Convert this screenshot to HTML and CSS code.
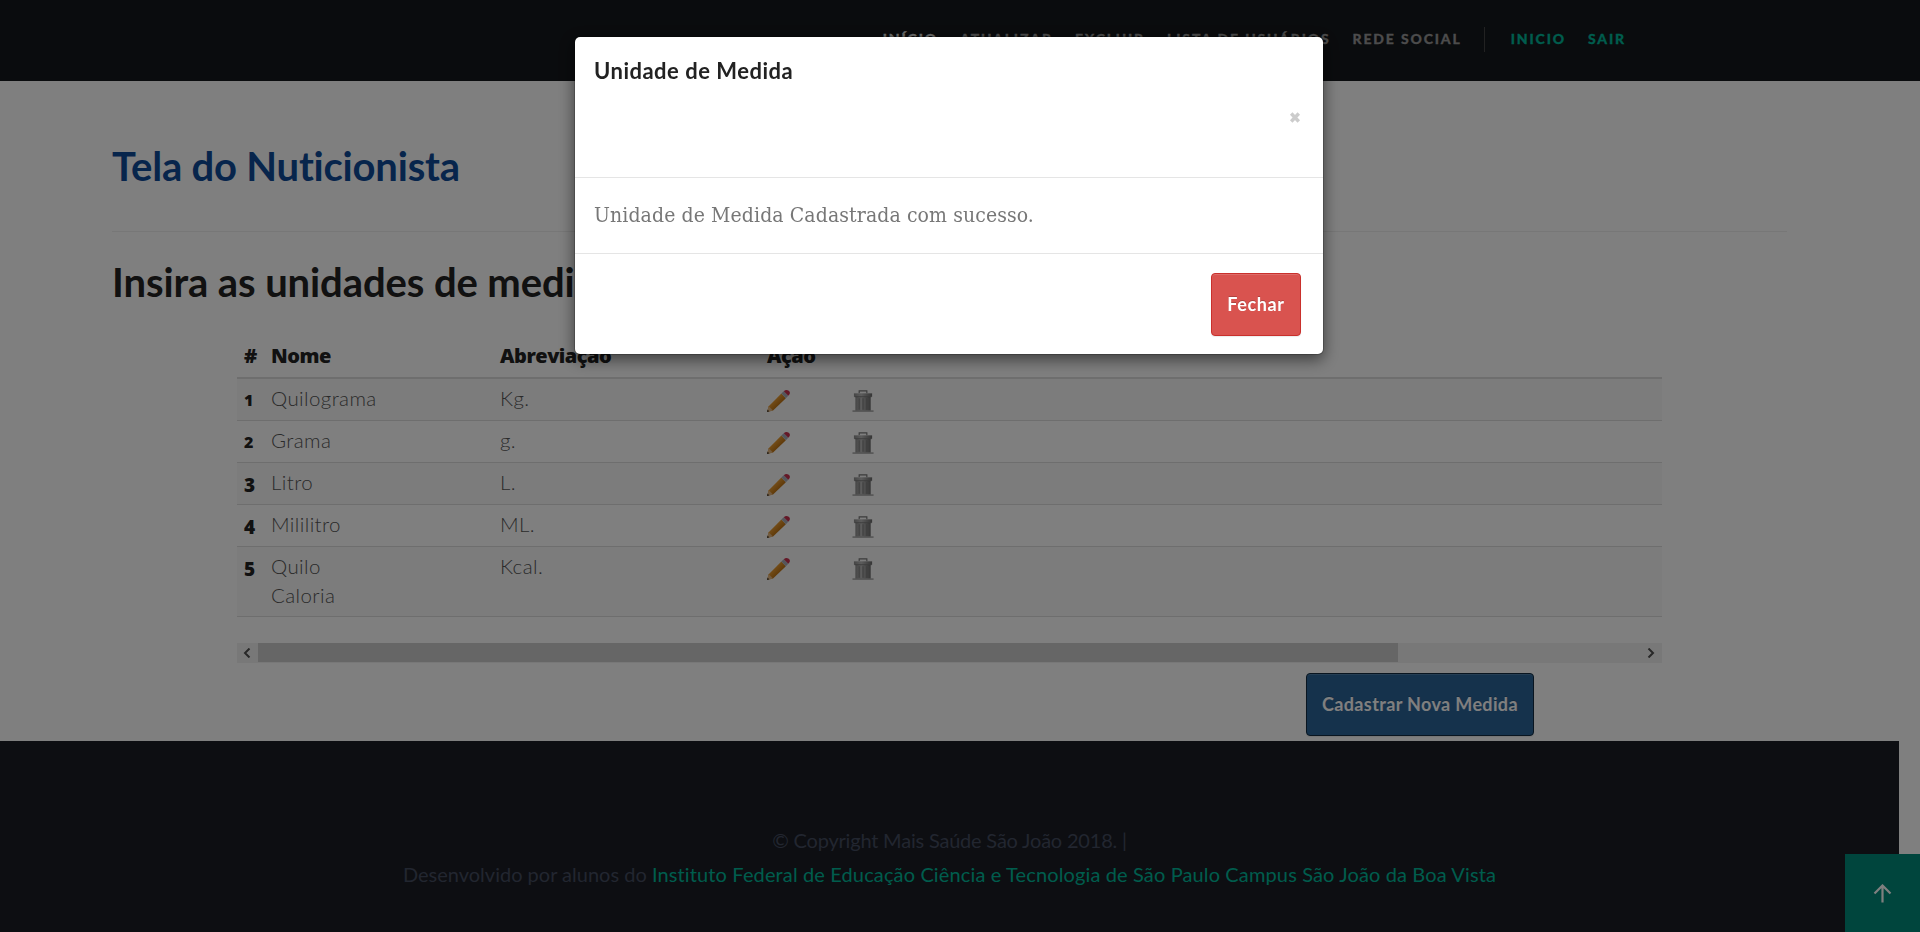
FILE: index.html
```html
<!DOCTYPE html>
<html lang="pt-BR">
<head>
<meta charset="utf-8">
<title>Mais Saúde São João</title>
<link rel="stylesheet" href="styles.css">
</head>
<body>
<svg class="sprite" aria-hidden="true">
  <defs>
    <linearGradient id="wood" x1="0" y1="0" x2="1" y2="1"><stop offset=".3" stop-color="#f2a63a"/><stop offset=".7" stop-color="#b4690c"/></linearGradient>
    <linearGradient id="metal"><stop offset="0" stop-color="#8c8c8c"/><stop offset=".4" stop-color="#b8b8b8"/><stop offset="1" stop-color="#6c6c6c"/></linearGradient>
  </defs>
  <symbol id="pencil" viewBox="0 0 24 24">
    <path d="M0 23.500 1.800 17.500 15 4.300 19.700 9 6.300 22Z" fill="url(#wood)"/>
    <path d="M0 23.500 1.800 17.500 6.300 22Z" fill="#e3b680"/>
    <path d="M0 23.500 .7 21.200 2.300 22.800Z" fill="#222"/>
    <path d="M15 4.300 17.500 1.800 22.200 6.500 19.700 9Z" fill="#a9adb8"/>
    <path d="M17.500 1.800Q20 -.8 22.700 1.400T22.200 6.500Z" fill="#c9304f"/>
  </symbol>
  <symbol id="trash" viewBox="0 0 24 24">
    <path d="M7.500 4V1.500H15.500V4" fill="none" stroke="#777" stroke-width="1.200"/>
    <path d="M2 4H21V7.500H2Z" fill="url(#metal)"/>
    <path d="M3.500 7.500H19.500V22H3.500Z" fill="url(#metal)"/>
    <path d="M2.500 7.500H20.500" stroke="#666" stroke-width=".8"/>
    <path d="M7.500 9V21M11.500 9V21M15.500 9V21" stroke="#7a7a7a" stroke-width="1.100"/>
    <path d="M.5 22.500H22.500" stroke="#8a8a8a" stroke-width="1.200"/>
  </symbol>
</svg>
<header class="topbar">
  <nav class="nav">
    <a class="nav-item active">INÍCIO</a><a class="nav-item">ATUALIZAR</a><a class="nav-item">EXCLUIR</a><a class="nav-item">LISTA DE USUÁRIOS</a><a class="nav-item">REDE SOCIAL</a>
    <span class="nav-divider"></span>
    <a class="nav-item accent">INICIO</a><a class="nav-item accent">SAIR</a>
  </nav>
</header>
<main class="page">
  <h1 class="title">Tela do Nuticionista</h1>
  <h2 class="subtitle">Insira as unidades de medida</h2>
  <div class="table-area">
    <table class="units">
      <thead><tr><th class="c-id">#</th><th class="c-name">Nome</th><th class="c-abbr">Abreviação</th><th class="c-edit">Ação</th><th></th></tr></thead>
      <tbody>
        <tr><th class="small-num">1</th><td>Quilograma</td><td>Kg.</td><td><svg class="icon"><use href="#pencil"/></svg></td><td><svg class="icon"><use href="#trash"/></svg></td></tr>
        <tr><th class="small-num">2</th><td>Grama</td><td>g.</td><td><svg class="icon"><use href="#pencil"/></svg></td><td><svg class="icon"><use href="#trash"/></svg></td></tr>
        <tr><th class="low-num">3</th><td>Litro</td><td>L.</td><td><svg class="icon"><use href="#pencil"/></svg></td><td><svg class="icon"><use href="#trash"/></svg></td></tr>
        <tr><th class="low-num">4</th><td>Mililitro</td><td>ML.</td><td><svg class="icon"><use href="#pencil"/></svg></td><td><svg class="icon"><use href="#trash"/></svg></td></tr>
        <tr><th class="low-num">5</th><td>Quilo<br>Caloria</td><td>Kcal.</td><td><svg class="icon"><use href="#pencil"/></svg></td><td><svg class="icon"><use href="#trash"/></svg></td></tr>
      </tbody>
    </table>
    <div class="scrollbar">
      <span class="arrow"><svg width="8" height="10" viewBox="0 0 8 10"><path d="M6.500 .5 2 5 6.500 9.500"/></svg></span>
      <span class="thumb"></span>
      <span class="arrow right"><svg width="8" height="10" viewBox="0 0 8 10"><path d="M1.500 .5 6 5 1.500 9.500"/></svg></span>
    </div>
  </div>
  <div class="actions"><button class="btn primary">Cadastrar Nova Medida</button></div>
</main>
<footer class="footer">
  <p class="copyright">© Copyright Mais Saúde São João 2018. |</p>
  <p>Desenvolvido por alunos do <a>Instituto Federal de Educação Ciência e Tecnologia de São Paulo Campus São João da Boa Vista</a></p>
</footer>
<a class="to-top"><svg width="19" height="19" viewBox="0 0 19 19"><path d="M9.500 18.500V2M1.500 9.500 9.500 1.500 17.500 9.500"/></svg></a>
<div class="backdrop">
  <section class="modal">
    <header class="modal-head"><h4>Unidade de Medida</h4><svg class="close" viewBox="0 0 12 11"><path d="M2.200 1.500 9.800 9.500M9.800 1.500 2.200 9.500"/></svg></header>
    <p class="modal-body">Unidade de Medida Cadastrada com sucesso.</p>
    <footer class="modal-foot"><button class="btn danger">Fechar</button></footer>
  </section>
</div>
</body>
</html>
```
FILE: styles.css
```css
* { box-sizing: border-box; }
html, body { margin: 0; height: 100%; overflow: hidden; }
body { background: #fff; font-family: Lato, "Open Sans", sans-serif; color: #222; }
.sprite { position: absolute; width: 0; height: 0; }

.topbar { height: 81px; background: #15181c; }
.nav { display: flex; align-items: center; justify-content: flex-end; height: 79px; width: 1626px; gap: 22px; }
.nav-item { padding-bottom: 2px; font-size: 14px; font-weight: 900; letter-spacing: 1.85px; color: #999; -webkit-text-stroke: .3px; }
.nav-item.active { color: #ddd; }
.nav-item.accent { color: #00b99b; }
.nav-divider { width: 1px; height: 25px; margin-right: 4px; background: #444; }

.page { height: 660px; padding: 0 133px 0 112px; }
.title, .subtitle { margin: 0; font-size: 40px; font-weight: 700; line-height: 44px; }
.title { height: 151px; padding-top: 63px; letter-spacing: -.2px; color: #0f4b98; border-bottom: 1px solid #eee; }
.subtitle { padding-top: 28px; height: 101px; letter-spacing: -.1px; color: #222; }
.table-area { width: 1425px; margin-left: 125px; }
.units { width: 100%; border-collapse: separate; border-spacing: 0; table-layout: fixed; font-size: 20.5px; line-height: 29px; }
.units th, .units td { padding: 5px 0 7px 7px; text-align: left; vertical-align: top; border-bottom: 1px solid #ddd; }
.units thead th { padding: 8px 0 7px 7px; height: 46px; border-bottom: 2px solid #ddd; font-family: "Open Sans", sans-serif; font-size: 20px; font-weight: 800; letter-spacing: -.5px; }
.units td { font-weight: 300; color: #555; letter-spacing: .4px; }
.units tbody tr:nth-child(odd) { background: #f9f9f9; }
.units tbody tr:last-child td { padding-bottom: 6px; }
.c-id { width: 27px; }
.c-name { width: 229px; }
.c-abbr { width: 267px; }
.c-edit { width: 85px; }
.icon { display: block; width: 23px; height: 24px; margin-top: 5px; }
.units .small-num, .units .low-num { font-family: "Open Sans", sans-serif; font-weight: 800; }
.units .small-num { font-size: 16px; padding-top: 7px; padding-bottom: 5px; }
.units .low-num { padding-top: 8px; padding-bottom: 4px; font-size: 19px; }

.scrollbar { display: flex; height: 20px; margin-top: 26px; background: #f1f1f1; }
.arrow { display: flex; align-items: center; justify-content: center; width: 20px; margin-right: 1px; }
.arrow.right { margin-left: auto; }
.arrow path { fill: none; stroke: #505050; stroke-width: 2; }
.thumb { width: 1140px; height: 19px; background: #cdcdcd; }
.actions { display: flex; justify-content: flex-end; padding: 10px 253px 0 0; }
.btn { height: 63px; padding: 0 0 2px; border-radius: 4px; border: 1px solid; color: #fff; font-family: inherit; font-size: 18px; font-weight: 700; text-shadow: 0 -1px 0 rgba(0,0,0,.2); box-shadow: inset 0 1px 0 rgba(255,255,255,.15), 0 1px 1px rgba(0,0,0,.08); }
.primary { width: 228px; background: #2b6599; border-color: #122b40; letter-spacing: .36px; }
.danger { width: 90px; background: #d9534f; border-color: #c9302c; letter-spacing: .6px; }

.footer { width: 1899px; height: 191px; padding-top: 82px; background: #1a1d24; text-align: center; font-size: 20px; line-height: 34px; color: #444c60; }
.footer p { margin: 0; white-space: nowrap; }
.footer .copyright { letter-spacing: -.2px; }
.footer a { color: #00b99b; letter-spacing: .13px; }
.to-top { position: fixed; right: 0; bottom: 0; width: 75px; height: 78px; display: flex; justify-content: center; padding-top: 30px; background: #008a7a; }
.to-top path { fill: none; stroke: #fff; stroke-width: 2.2; }

.backdrop { position: fixed; inset: 0; display: flex; justify-content: center; align-items: flex-start; padding: 36px 22px 0 0; background: rgba(0,0,0,.5); }
.modal { width: 750px; height: 319px; border: 1px solid rgba(0,0,0,.2); border-radius: 6px; background: #fff; background-clip: padding-box; box-shadow: 0 5px 15px rgba(0,0,0,.5); }
.modal-head { display: flex; flex-direction: column; height: 141px; padding: 20px 19px 0; border-bottom: 1px solid #e5e5e5; }
.modal-head h4 { margin: 0; font-size: 22px; line-height: 27px; font-weight: 700; letter-spacing: .5px; }
.close { width: 12px; height: 11px; margin: 28px 3px 0 auto; }
.close path { stroke: #ccc; stroke-width: 3.4; }
.modal-body { margin: 0; height: 76px; padding: 23px 19px 0; border-bottom: 1px solid #e5e5e5; font: 21px/28px "DejaVu Serif Condensed", "DejaVu Serif", serif; letter-spacing: .1px; color: #777; }
.modal-foot { display: flex; justify-content: flex-end; padding: 19px 22px 0; }
```
